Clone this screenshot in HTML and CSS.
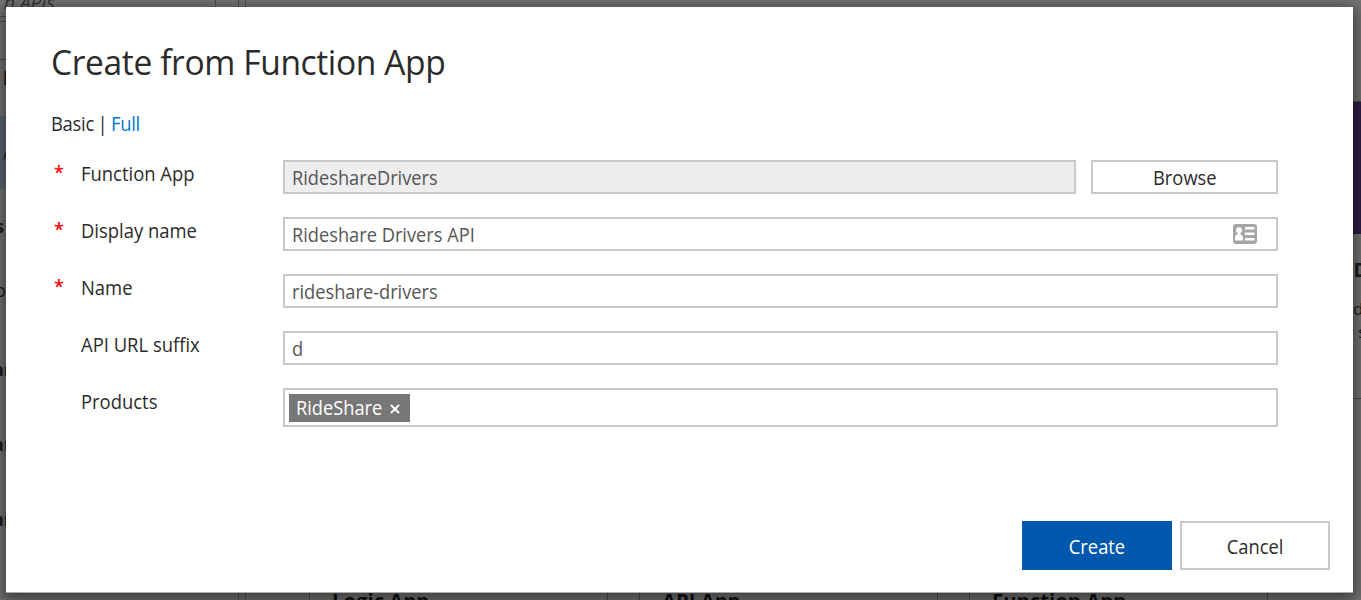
FILE: index.html
```html
<!DOCTYPE html>
<html lang="en">
<head>
<meta charset="utf-8">
<title>Create from Function App</title>
<link rel="stylesheet" href="styles.css">
</head>
<body>
<div class="page">
  <aside class="sidebar">
    <div class="search">h APIs</div>
    <div class="filter"></div>
    <div class="side-item all">b</div>
    <div class="side-item selected">A</div>
    <div class="side-item strong shift">s</div>
    <div class="side-item shift low">op</div>
    <div class="side-item strong clip">ar</div>
    <div class="side-item strong clip">ar</div>
    <div class="side-item strong clip">ar</div>
  </aside>
  <main class="cards">
    <div class="card"></div>
    <div class="card"></div>
    <div class="card"></div>
    <div class="card wide">
      <div class="banner"></div>
      <b class="peek-title">eD</b>
      <span class="peek">d</span>
      <span class="peek second-line">r s</span>
    </div>
    <div class="card second"><b>Logic App</b></div>
    <div class="card second"><b>API App</b></div>
    <div class="card second"><b>Function App</b></div>
  </main>
</div>
<section class="dialog" role="dialog" aria-labelledby="title">
  <h1 id="title">Create from Function App</h1>
  <div class="modes">Basic | <a>Full</a></div>
  <form class="form">
    <div class="row"><i class="req">*</i><label>Function App</label>
      <div class="field disabled"><span>RideshareDrivers</span></div><button type="button" class="browse"><span>Browse</span></button></div>
    <div class="row"><i class="req">*</i><label>Display name</label>
      <div class="field"><span>Rideshare Drivers API</span>
        <svg class="contact" width="26" height="22" viewBox="0 0 26 22">
          <rect x="1" y="1" width="24" height="20" rx="3" fill="#a5a5a5"/>
          <circle cx="7" cy="7.3" r="3" fill="#fff"/>
          <path d="M5.8 9h2.4v2c1.800.6 2.600 1.800 2.600 4v2.500H3V15c0-2.200.9-3.400 2.800-4z" fill="#fff"/>
          <path d="M13 4h9.500v2.500H13zM13 9.600h9.500v2.400H13zM13 15.100h9.500v2.400H13z" fill="#fff"/>
        </svg></div></div>
    <div class="row"><i class="req">*</i><label>Name</label>
      <div class="field"><span>rideshare-drivers</span></div></div>
    <div class="row"><i class="req"></i><label>API URL suffix</label>
      <div class="field"><span>d</span></div></div>
    <div class="row products"><i class="req"></i><label>Products</label>
      <div class="field"><div class="tag"><span>RideShare</span>
        <svg width="10" height="10" viewBox="0 0 10 10"><path d="M1 1l8 8M9 1L1 9" stroke="#fff" stroke-width="2"/></svg></div></div></div>
  </form>
  <footer class="actions"><button class="create"><span>Create</span></button><button class="cancel"><span>Cancel</span></button></footer>
</section>
</body>
</html>
```
FILE: styles.css
```css
* { box-sizing: border-box; }
body { margin: 0; width: 1361px; height: 600px; overflow: hidden; background: #757575; font-family: "Open Sans", "Noto Sans", sans-serif; font-size: 19.5px; color: #2b2b2b; }
.page { display: flex; height: 600px; overflow: hidden; color: #1c1c1c; }
.sidebar { flex: none; width: 246px; border-right: 1px solid #4e4e4e; box-shadow: inset -6px 0 #757575, inset -7px 0 #4e4e4e; overflow: hidden; }
.search { width: 216px; height: 17px; border-right: 1px solid #4e4e4e; border-bottom: 1px solid #4e4e4e; font-size: 19px; font-style: italic; line-height: 4px; padding-left: 4px; color: #333; }
.filter { margin-top: 4px; width: 216px; height: 39px; border: 1px solid #4e4e4e; border-left: 0; }
.side-item { height: 75px; line-height: 75px; white-space: nowrap; font-size: 18px; }
.side-item.all { height: 56px; line-height: 36px; padding-left: 3px; font-weight: 700; }
.side-item.selected { height: 73px; background: #5f6874; padding-left: 3px; font-size: 14px; }
.shift { text-indent: -5px; }
.low { height: 69px; line-height: 53px; }
.clip { text-indent: -7px; line-height: 73px; }
.strong { font-weight: 700; }
.cards { flex: none; width: 1400px; padding: 101px 0 0 63px; display: grid; grid-template-columns: repeat(4, 299px); grid-auto-rows: 298px; column-gap: 31px; row-gap: 32px; }
.card { border: 1px solid #4c4c4c; }
.wide { display: flex; flex-direction: column; padding-left: 53px; overflow: hidden; }
.banner { flex: none; height: 133px; margin: -1px 0 0 -53px; background: #301d4a; }
.peek-title { margin-top: 22px; height: 41px; line-height: 28px; margin-left: -11px; }
.peek { font-size: 17px; line-height: 23px; }
.second-line { margin-left: -6px; }
.second { padding: 155px 22px 0; line-height: 26px; font-size: 20.3px; color: #111; }
.dialog { position: absolute; left: 6px; top: 7px; width: 1347px; height: 586px; padding: 29px 23px 22px 45px; background: #fff; border-bottom: 1px solid #aaa; box-shadow: 0 4px 14px 4px rgba(0,0,0,.45); display: flex; flex-direction: column; }
/* Condensed proportions for the dialog's lettering */
h1, .modes, label { transform: scaleX(.945); transform-origin: left; }
h1 { margin: 0; height: 50px; line-height: 50px; font-size: 35.5px; font-weight: 400; white-space: nowrap; letter-spacing: -.4px; }
.modes { height: 26px; margin-top: 25px; line-height: 26px; white-space: nowrap; letter-spacing: -.3px; word-spacing: -1px; }
.modes a { color: #0078d4; }
.form { margin-top: 23px; display: flex; flex-direction: column; gap: 23px; width: 1227px; }
.row { display: flex; height: 34px; }
.products { height: 39px; }
.req { width: 30px; padding-left: 3px; line-height: 25px; color: #f00; font-style: normal; font-weight: 600; font-size: 18px; }
label { width: 202px; line-height: 28px; white-space: nowrap; }
.field { flex: 1; display: flex; align-items: center; justify-content: space-between; border: 2px solid #c8c8c8; padding: 1px 18px 0 7px; color: #555; white-space: nowrap; }
.field span { display: inline-block; transform: scaleX(.935); transform-origin: left; }
.disabled { background: #eee; }
.contact { margin-top: -1px; }
.products .field { padding: 0 4px; }
.tag { height: 28px; width: 121px; padding: 0 10px 0 7px; background: #777; color: #fff; display: flex; align-items: center; justify-content: space-between; }
.tag svg { flex: none; margin: 3px 0 0 -8px; }
button { font: inherit; border: 2px solid #c8c8c8; background: #fff; color: #2b2b2b; padding: 0; }
button span { display: inline-block; transform: scaleX(.94); }
.browse { width: 187px; margin-left: 15px; }
.actions { margin-top: auto; display: flex; justify-content: flex-end; gap: 8px; }
.actions button { width: 150px; height: 49px; padding-top: 2px; }
.actions .create { background: #0058ad; border-color: #0058ad; color: #fff; }
```
